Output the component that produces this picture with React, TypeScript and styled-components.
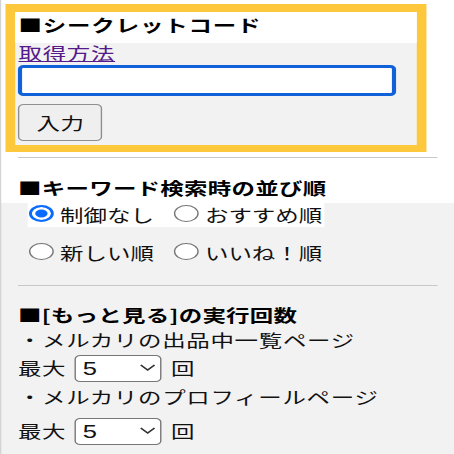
import React from "react";
import styled, { createGlobalStyle } from "styled-components";

// the reference is a popup stretched sideways, so the page is laid out
// at its own width and widened once at the root
const STRETCH = 1.38;

const GlobalStyle = createGlobalStyle`
  html, body {
    margin: 0;
    padding: 0;
    background: #f2f2f2;
    overflow: hidden;
  }
  body {
    font-family: "Noto Sans CJK JP", "Liberation Sans", sans-serif;
    font-size: 17px;
    color: #111;
  }
`;

const Page = styled.div`
  width: 329px;
  min-height: 454px;
  box-sizing: border-box;
  border-left: 1px solid #d4d4d4;
  transform: scaleX(${STRETCH});
  transform-origin: 0 0;
`;

const TopBlock = styled.div`
  background: #fff;
  padding: 4px 12px 3px 12px;
`;

const Section = styled.div`
  padding: 0 12px;
`;

const Highlight = styled.div`
  margin-left: -9px;
  width: 305px;
  box-sizing: border-box;
  border: solid #fec83c;
  border-width: 8px 7px 7px 7px;
  background: #f2f2f2;
`;

const HighlightTitle = styled.div`
  background: #fff;
  padding: 0 0 6px 2.4px;
  font-weight: bold;
  line-height: 25px;
  letter-spacing: 0.6px;
  color: #000;
`;

const HighlightBody = styled.div`
  padding: 0 0 4px 2.4px;
`;

const HowTo = styled.a`
  display: block;
  width: fit-content;
  line-height: 20px;
  letter-spacing: 0.5px;
  color: #551a8b;
  text-decoration: underline;
`;

const CodeInput = styled.input`
  display: block;
  box-sizing: border-box;
  width: 274px;
  height: 31px;
  margin-top: 2px;
  border: 3px solid #1162d9;
  border-radius: 4px;
  background: #fff;
  outline: none;
`;

const SubmitButton = styled.button`
  display: block;
  box-sizing: border-box;
  width: 61px;
  height: 37px;
  margin-top: 8px;
  padding: 0;
  border: 1px solid #8f8f8f;
  border-radius: 4px;
  background: #efefef;
  font-family: inherit;
  font-size: 17px;
  letter-spacing: 0.5px;
  color: #111;
`;

const Rule = styled.div<{ $top: number }>`
  margin-top: ${(p) => p.$top}px;
  border-top: 1px solid #c8c8c8;
`;

const SectionTitle = styled.div<{ $top: number }>`
  margin-top: ${(p) => p.$top}px;
  font-weight: bold;
  line-height: 25px;
  letter-spacing: 0.2px;
  color: #000;
`;

const RadioRow = styled.div<{ $white?: boolean; $top?: number }>`
  display: flex;
  align-items: center;
  gap: 14px;
  width: fit-content;
  height: 24px;
  margin: ${(p) => p.$top ?? 0}px 0 0 6.5px;
  padding: 0 1.5px 0 1px;
  background: ${(p) => (p.$white ? "#fff" : "transparent")};
`;

const Option = styled.label`
  display: flex;
  align-items: center;
  gap: 5px;
  line-height: 24px;
`;

const Radio = styled.input`
  appearance: none;
  box-sizing: border-box;
  width: 18px;
  height: 17px;
  margin: 0 0 3px 0;
  border: 1px solid #767676;
  border-radius: 50%;
  background: #fff;

  &:checked {
    border: 2px solid #0a6cff;
    background: #0a6cff;
    box-shadow: inset 0 0 0 2.5px #fff;
  }
`;

const Line = styled.div<{ $top?: number }>`
  margin-top: ${(p) => p.$top ?? 0}px;
  line-height: 25px;
  letter-spacing: 0.5px;
`;

const SelectRow = styled.div<{ $top: number }>`
  display: flex;
  align-items: center;
  margin-top: ${(p) => p.$top}px;
  line-height: 27px;
  letter-spacing: 0.5px;
`;

const SelectWrap = styled.div`
  position: relative;
  width: 63px;
  height: 27px;
  margin: 0 7px 0 6px;
`;

const Select = styled.select`
  appearance: none;
  box-sizing: border-box;
  width: 100%;
  height: 100%;
  padding: 0 0 0 5px;
  border: 1px solid #767676;
  border-radius: 4px;
  background: #fff;
  font-family: "Liberation Sans", sans-serif;
  font-size: 18.5px;
  color: #111;
`;

const Chevron = styled.svg`
  position: absolute;
  right: 4px;
  top: 10px;
  pointer-events: none;
`;

const RunSelect: React.FC = () => (
  <SelectWrap>
    <Select defaultValue="5">
      {[1, 2, 3, 4, 5, 6, 7, 8, 9, 10].map((n) => (
        <option key={n} value={String(n)}>
          {n}
        </option>
      ))}
    </Select>
    <Chevron width="12" height="7" viewBox="0 0 12 7">
      <path d="M1 1l5 5 5-5" fill="none" stroke="#333" strokeWidth="1.3" />
    </Chevron>
  </SelectWrap>
);

export default function App() {
  return (
    <>
      <GlobalStyle />
      <Page>
        <TopBlock>
          {/* secret code box */}
          <Highlight>
            <HighlightTitle>■シークレットコード</HighlightTitle>
            <HighlightBody>
              <HowTo href="#">取得方法</HowTo>
              <CodeInput type="text" />
              <SubmitButton>入力</SubmitButton>
            </HighlightBody>
          </Highlight>
          <Rule $top={5} />
          <SectionTitle $top={17}>■キーワード検索時の並び順</SectionTitle>
        </TopBlock>

        {/* sort order */}
        <Section>
          <RadioRow $white>
            <Option>
              <Radio type="radio" name="sort" defaultChecked />
              制御なし
            </Option>
            <Option>
              <Radio type="radio" name="sort" />
              おすすめ順
            </Option>
          </RadioRow>
          <RadioRow $top={14}>
            <Option>
              <Radio type="radio" name="sort" />
              新しい順
            </Option>
            <Option>
              <Radio type="radio" name="sort" />
              いいね！順
            </Option>
          </RadioRow>
          <Rule $top={20} />

          {/* "see more" runs */}
          <SectionTitle $top={16}>■[もっと見る]の実行回数</SectionTitle>
          <Line>・メルカリの出品中一覧ページ</Line>
          <SelectRow $top={2}>
            最大
            <RunSelect />回
          </SelectRow>
          <Line $top={3}>・メルカリのプロフィールページ</Line>
          <SelectRow $top={8}>
            最大
            <RunSelect />回
          </SelectRow>
        </Section>
      </Page>
    </>
  );
}
